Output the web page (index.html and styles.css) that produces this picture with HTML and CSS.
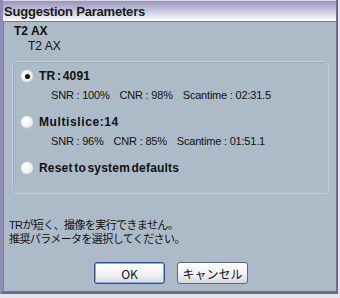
FILE: index.html
```html
<!DOCTYPE html>
<html lang="ja">
<head>
    <meta charset="UTF-8">
    <title>Suggestion Parameters</title>
    <link rel="stylesheet" href="styles.css">
</head>
<body>
    <div class="window">
        <div class="titlebar">Suggestion Parameters</div>
        <div class="content">
            <div class="protocol">T2 AX</div>
            <div class="protocol-sub">T2 AX</div>

            <div class="group">
                <div class="option">
                    <span class="radio checked"></span>
                    <span class="label">TR : 4091</span>
                </div>
                <div class="stats">
                    <span>SNR : 100%</span>
                    <span>CNR : 98%</span>
                    <span>Scantime : 02:31.5</span>
                </div>

                <div class="option">
                    <span class="radio"></span>
                    <span class="label wide">Multislice:14</span>
                </div>
                <div class="stats">
                    <span>SNR : 96%</span>
                    <span>CNR : 85%</span>
                    <span>Scantime : 01:51.1</span>
                </div>

                <div class="option">
                    <span class="radio"></span>
                    <span class="label">Reset to system defaults</span>
                </div>
            </div>

            <p class="message">TRが短く、撮像を実行できません。<br>推奨パラメータを選択してください。</p>

            <div class="buttons">
                <button class="btn default">OK</button>
                <button class="btn">キャンセル</button>
            </div>
        </div>
    </div>
</body>
</html>
```

FILE: styles.css
```css
body {
    margin: 0;
    background: #e4e6ec;
    font-family: "Liberation Sans", "Noto Sans CJK JP", sans-serif;
    color: #111;
}
.window {
    width: 333px;
    height: 291px;
    border-left: 3px solid #8e8cb2;
    border-right: 2px solid #6e6c8e;
    border-bottom: 3px solid #6e6c8e;
    background: #acbbc7;
    display: flex;
    flex-direction: column;
}
.titlebar {
    height: 20px;
    border-top: 1px solid #d8d8ea;
    border-bottom: 1px solid #7a7a98;
    background: linear-gradient(to bottom, #9894ba, #c4c2da 45%, #ffffff);
    font-size: 13px;
    font-weight: bold;
    line-height: 21px;
    padding-left: 1px;
    color: #1a1a1a;
    letter-spacing: -0.2px;
}
.content {
    flex: 1;
    border-left: 1px solid #7c7e96;
    padding: 2px 0 0 0;
    display: flex;
    flex-direction: column;
}
.protocol {
    font-size: 12px;
    font-weight: bold;
    margin-left: 10px;
    line-height: 14px;
}
.protocol-sub {
    font-size: 12px;
    margin-left: 24px;
    line-height: 14px;
    margin-top: 1px;
}
.group {
    margin: 8px 7px 0 8px;
    height: 133px;
    border: 1px solid #c6ced6;
    border-radius: 5px;
    box-shadow: inset 1px 1px 0 #9eacb8;
    padding: 5px 0 0 8px;
    box-sizing: border-box;
}
.option {
    display: flex;
    align-items: center;
    gap: 6px;
    height: 18px;
}
.radio {
    width: 12px;
    height: 12px;
    border-radius: 50%;
    background: radial-gradient(circle at 40% 40%, #ffffff, #f2f2f2 55%, #c8ccd4);
    box-shadow: 0 0 0 1px #b8c0c8;
    display: flex;
    align-items: center;
    justify-content: center;
}
.radio.checked::after {
    content: "";
    width: 5px;
    height: 5px;
    border-radius: 50%;
    background: #111;
}
.label {
    font-size: 12px;
    font-weight: bold;
    letter-spacing: 0.2px;
    word-spacing: -2px;
}
.label.wide {
    letter-spacing: 0.6px;
}
.stats {
    display: flex;
    gap: 10px;
    font-size: 11px;
    letter-spacing: -0.2px;
    margin: 2px 0 10px 30px;
    height: 16px;
    line-height: 16px;
}
.message {
    margin: 24px 0 0 5px;
    font-size: 11px;
    line-height: 14px;
    letter-spacing: -0.6px;
}
.buttons {
    display: flex;
    justify-content: center;
    gap: 12px;
    margin-top: 16px;
    padding-left: 2px;
}
.btn {
    width: 71px;
    height: 22px;
    font-family: "Noto Sans CJK JP", "Liberation Sans", sans-serif;
    font-size: 12px;
    padding: 0;
    border: 1px solid #56698a;
    border-radius: 3px;
    background: linear-gradient(to bottom, #ffffff, #f0f0f4 60%, #d6d8e0);
    color: #111;
}
.btn.default {
    border-color: #2d4f9c;
    box-shadow: inset 0 0 0 1px #8fa8d8;
}
```
